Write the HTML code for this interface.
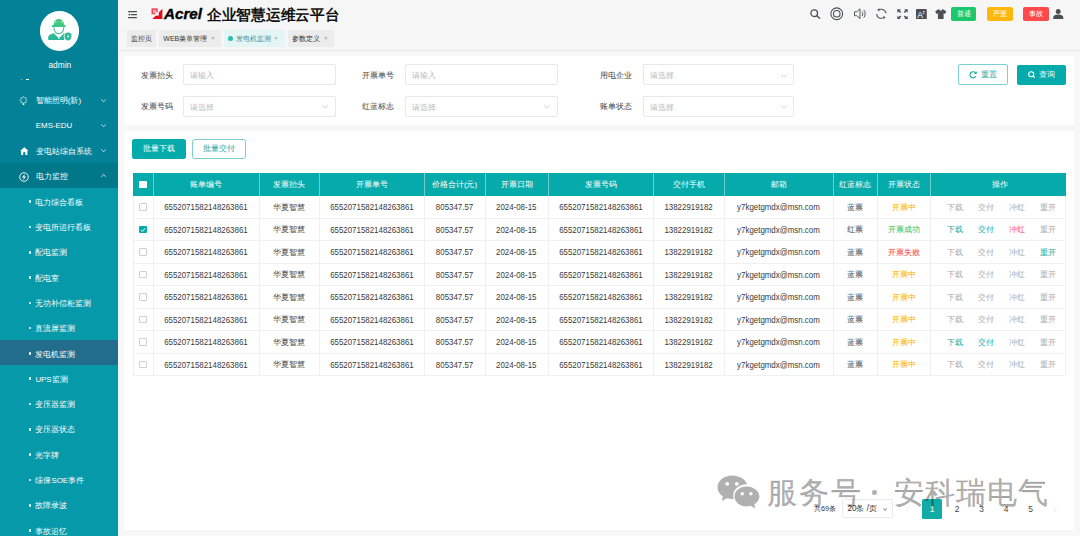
<!DOCTYPE html>
<html><head><meta charset="utf-8">
<style>
*{box-sizing:border-box;margin:0;padding:0}
html,body{width:1080px;height:536px;overflow:hidden;background:#f7f7f7;font-family:"Liberation Sans",sans-serif;color:#333}
.a{position:absolute}
.t{position:absolute;white-space:nowrap;line-height:1}
#sb{position:absolute;left:0;top:0;width:118px;height:536px;background:#0699aa}
#sbtop{position:absolute;left:0;top:0;width:118px;height:188px;background:#038297}
.mi{position:absolute;left:0;width:118px;height:25.3px;color:#fff;font-size:7.9px;display:flex;align-items:center}
.mi span{position:absolute;left:35.8px;top:9.8px;line-height:1}
.chev{position:absolute;left:101px;width:5.3px;height:3.2px}
.sub{position:absolute;left:0;width:118px;height:25.3px;color:#fff;font-size:7.9px;display:flex;align-items:center}
.sub i{position:absolute;left:28.7px;width:2.6px;height:2.6px;border-radius:50%;background:#fff}
.sub span{position:absolute;left:35.4px;top:9.8px;line-height:1}
.tab{position:absolute;top:30px;height:16.7px;background:#ececec;font-size:7px;color:#333;display:flex;align-items:center}
.tab span{position:absolute;top:5.2px;line-height:1}
.tab b{position:absolute;font-weight:normal;color:#999;font-size:6px}
.card{position:absolute;background:#fff}
.lbl{position:absolute;font-size:7.9px;color:#444;line-height:1;white-space:nowrap}
.inp{position:absolute;border:1px solid #e8e8e8;border-radius:2px;background:#fff}
.inp span{position:absolute;left:6px;top:calc(50% + 1.2px);transform:translateY(-50%);font-size:7.6px;color:#b8b8b8;white-space:nowrap;line-height:1}
.inp svg{position:absolute}
.hc{position:absolute;display:flex;align-items:center;justify-content:center;color:#fff;font-size:7.8px;white-space:nowrap}
.bc{position:absolute;display:flex;align-items:center;justify-content:center;color:#444;font-size:7.9px;white-space:nowrap}
.d{display:inline-block;font-size:8.7px;transform:scaleX(0.91);color:#3a3a3a}
</style></head><body>

<!-- Sidebar -->
<div id="sb"></div>
<div id="sbtop"></div>
<div class="a" style="left:0;top:163px;width:118px;height:25px;background:#00788a"></div>
<div class="a" style="left:0;top:340px;width:118px;height:25px;background:#226d8b"></div>

<!-- avatar -->
<div class="a" style="left:39.5px;top:11.3px;width:39.3px;height:39.3px;border-radius:50%;background:#fff"></div>
<svg class="a" style="left:44px;top:14px" width="32" height="30" viewBox="0 0 32 30">
  <defs><linearGradient id="g1" gradientUnits="userSpaceOnUse" x1="0" y1="5" x2="0" y2="27"><stop offset="0" stop-color="#4ccb7c"/><stop offset="1" stop-color="#22b69c"/></linearGradient></defs>
  <g fill="url(#g1)">
  <path d="M9.6 11.4 C9.6 7 11.6 4.9 14.8 4.9 C18 4.9 20 7 20 11.4 Z"/>
  <rect x="7.8" y="11" width="14" height="1.9" rx="0.9"/>
  <path d="M9.4 12.9 L10.4 12.9 C10.4 16.5 12 19 14.8 19 C17.6 19 19.3 16.5 19.3 12.9 L20.3 12.9 C20.3 17.2 18 20 14.8 20 C11.7 20 9.4 17.2 9.4 12.9 Z"/>
  <path d="M4.2 26 L4.2 23.6 C4.2 21.2 6.6 20 10.2 19.3 L14.8 24.2 L19.6 19.3 L20.2 19.5 L20.2 26 Z"/>
  <path d="M24 17.9 L27.8 19.4 L27.8 22.6 C27.8 24.7 26.3 26.3 24 27 C21.7 26.3 20.2 24.7 20.2 22.6 L20.2 19.4 Z" stroke="#fff" stroke-width="0.7"/>
  </g>
  <rect x="11.2" y="7.2" width="1" height="1.6" fill="#fff" opacity="0.8"/>
  <rect x="17.4" y="7.2" width="1" height="1.6" fill="#fff" opacity="0.8"/>
  <path d="M11.3 20.4 L13.6 22.8 M18.3 20.4 L16 22.8" stroke="#fff" stroke-width="0.7"/>
  <rect x="14.2" y="24.2" width="1.3" height="0.8" fill="#fff"/>
  <path d="M24.6 20 L22.9 22.9 L24.1 22.9 L23.6 25.1 L25.4 22.1 L24.2 22.1 Z" fill="#fff"/>
</svg>
<div class="t" style="left:48.5px;top:61.2px;font-size:8.3px;color:#fff">admin</div>
<div class="a" style="left:25.5px;top:78.5px;width:3.2px;height:1px;background:#fff"></div>
<div class="a" style="left:21px;top:78.5px;width:1px;height:1px;background:rgba(255,255,255,.5)"></div>

<!-- parent menu items -->
<div class="mi" style="top:87.6px"><span>智能照明(新)</span></div>
<div class="mi" style="top:112.7px"><span>EMS-EDU</span></div>
<div class="mi" style="top:138px"><span>变电站综自系统</span></div>
<div class="mi" style="top:163.3px"><span>电力监控</span></div>
<!-- icons -->
<svg class="a" style="left:19.2px;top:95.6px" width="9" height="10" viewBox="0 0 9 10">
  <polygon points="4.50,0.40 5.38,2.08 7.19,1.51 6.62,3.32 8.30,4.20 6.62,5.08 7.19,6.89 5.38,6.32 4.50,8.00 3.62,6.32 1.81,6.89 2.38,5.08 0.70,4.20 2.38,3.32 1.81,1.51 3.62,2.08" fill="none" stroke="rgba(255,255,255,0.8)" stroke-width="0.6" stroke-linejoin="miter"/>
  <rect x="3.7" y="7.4" width="1.6" height="1.7" fill="#fff"/>
</svg>
<svg class="a" style="left:19.7px;top:146.8px" width="8.5" height="8.2" viewBox="0 0 8.5 8.2">
  <path d="M4.25 0.2 L8.4 3.9 L7.4 3.9 L7.4 8.1 L1.1 8.1 L1.1 3.9 L0.1 3.9 Z" fill="#fff"/>
  <path d="M3.2 8.1 L3.2 5.6 C3.2 4.9 5.3 4.9 5.3 5.6 L5.3 8.1 Z" fill="#038297"/>
</svg>
<svg class="a" style="left:19px;top:171.5px" width="10" height="10" viewBox="0 0 10 10">
  <circle cx="5" cy="5" r="4.3" fill="none" stroke="#fff" stroke-width="0.9"/>
  <path d="M5.8 1.8 L3 5.4 L4.8 5.4 L4.2 8.2 L7 4.6 L5.2 4.6 Z" fill="#fff"/>
</svg>
<!-- chevrons -->
<svg class="chev" style="top:98.5px" viewBox="0 0 5.3 3.2"><path d="M0.3 0.3 L2.65 2.8 L5 0.3" fill="none" stroke="#fff" stroke-width="0.7"/></svg>
<svg class="chev" style="top:123.6px" viewBox="0 0 5.3 3.2"><path d="M0.3 0.3 L2.65 2.8 L5 0.3" fill="none" stroke="#fff" stroke-width="0.7"/></svg>
<svg class="chev" style="top:148.8px" viewBox="0 0 5.3 3.2"><path d="M0.3 0.3 L2.65 2.8 L5 0.3" fill="none" stroke="#fff" stroke-width="0.7"/></svg>
<svg class="chev" style="top:174.4px" viewBox="0 0 5.3 3.2"><path d="M0.3 2.9 L2.65 0.4 L5 2.9" fill="none" stroke="#fff" stroke-width="0.7"/></svg>

<!-- submenu -->
<div class="sub" style="top:189px"><i></i><span>电力综合看板</span></div>
<div class="sub" style="top:214.3px"><i></i><span>变电所运行看板</span></div>
<div class="sub" style="top:239.6px"><i></i><span>配电监测</span></div>
<div class="sub" style="top:264.9px"><i></i><span>配电室</span></div>
<div class="sub" style="top:290.2px"><i></i><span>无功补偿柜监测</span></div>
<div class="sub" style="top:315.5px"><i></i><span>直流屏监测</span></div>
<div class="sub" style="top:340.8px"><i></i><span>发电机监测</span></div>
<div class="sub" style="top:366.1px"><i></i><span>UPS监测</span></div>
<div class="sub" style="top:391.4px"><i></i><span>变压器监测</span></div>
<div class="sub" style="top:416.7px"><i></i><span>变压器状态</span></div>
<div class="sub" style="top:442px"><i></i><span>光字牌</span></div>
<div class="sub" style="top:467.3px"><i></i><span>综保SOE事件</span></div>
<div class="sub" style="top:492.6px"><i></i><span>故障录波</span></div>
<div class="sub" style="top:517.9px"><i></i><span>事故追忆</span></div>

<!-- HEADER -->
<div class="a" style="left:118px;top:0;width:962px;height:50px;background:#f6f6f6"></div><div class="a" style="left:118px;top:50px;width:962px;height:1px;background:#e8e8e8"></div>
<!-- hamburger -->
<svg class="a" style="left:128px;top:11px" width="9" height="8" viewBox="0 0 9 8" fill="#4b4f56">
  <rect x="0" y="0.1" width="9" height="1.2" rx="0.5"/>
  <rect x="2.6" y="3.1" width="6.4" height="1.2" rx="0.5"/>
  <rect x="0" y="6.1" width="9" height="1.2" rx="0.5"/>
  <path d="M0 3.7 L1.9 2.6 L1.9 4.8 Z"/>
</svg>
<!-- logo -->
<svg class="a" style="left:150.5px;top:8px" width="12" height="11.5" viewBox="0 0 12 11.5">
  <path d="M0.5 0.3 L6.8 0.3 L6.8 6.3 L0.5 6.3 Z" fill="#ec4a5a"/>
  <path d="M11.4 0.7 L11.4 11 L1.4 11 Z" fill="#e60e1c"/>
  <rect x="2.1" y="1.9" width="3.1" height="2.8" fill="#fff" opacity="0.55"/>
  <rect x="4.4" y="4.3" width="3.3" height="3.3" fill="#fff"/>
</svg>
<div class="t" style="left:164px;top:6.6px;font-size:14.2px;font-weight:bold;font-style:italic;color:#000;-webkit-text-stroke:0.35px #000;transform:scaleX(1.07);transform-origin:0 0">Acrel</div>
<div class="t" style="left:207.4px;top:8px;font-size:14.5px;font-weight:bold;color:#111;transform:scaleX(0.98);transform-origin:0 0">企业智慧运维云平台</div>

<!-- header right icons -->
<svg class="a" style="left:810px;top:9.3px" width="11" height="10" viewBox="0 0 11 10" fill="none" stroke="#4b4f56" stroke-width="1.3">
  <circle cx="4.2" cy="4.2" r="3.3"/><path d="M6.6 6.6 L10 9.6"/>
</svg>
<svg class="a" style="left:830px;top:7.3px" width="13.5" height="13.5" viewBox="0 0 13.5 13.5" fill="none" stroke="#4b4f56" stroke-width="0.9">
  <circle cx="6.75" cy="6.75" r="5.9" stroke-width="1.1"/><circle cx="6.75" cy="6.75" r="3.3" stroke-width="1.1"/>
</svg>
<svg class="a" style="left:853.5px;top:7.8px" width="12.5" height="11.5" viewBox="0 0 12.5 11.5" fill="none" stroke="#4b4f56" stroke-width="0.95">
  <path d="M0.5 3.8 L2.8 3.8 L6 0.8 L6 10.7 L2.8 7.7 L0.5 7.7 Z"/>
  <path d="M8 3.5 C9 4.5 9 7 8 8"/><path d="M9.8 1.9 C11.6 3.8 11.6 7.7 9.8 9.6"/>
</svg>
<svg class="a" style="left:875px;top:8px" width="13" height="12" viewBox="0 0 13 12" fill="none" stroke="#4b4f56" stroke-width="1.05">
  <path d="M3.2 1.6 C4.4 1.3 5.6 1.2 6.6 1.3 C9 1.6 10.6 3.2 11.1 5.4"/>
  <path d="M1.6 6.1 C2 8.4 3.6 10.1 6 10.3 C7.2 10.4 8.2 10.2 9.4 9.6"/>
  <path d="M2.1 1.8 L4.4 0.5 L4.4 3.6 Z" fill="#4b4f56" stroke="none"/>
  <path d="M10.7 9.5 L8.4 10.8 L8.4 7.8 Z" fill="#4b4f56" stroke="none"/>
</svg>
<svg class="a" style="left:897px;top:8.6px" width="11" height="10.5" viewBox="0 0 11 10.5" fill="#4b4f56">
  <path d="M0.3 0.3 L3.8 0.3 L2.7 1.4 L4.3 3 L3.2 4.1 L1.6 2.5 L0.3 3.8 Z"/>
  <path d="M10.7 0.3 L7.2 0.3 L8.3 1.4 L6.7 3 L7.8 4.1 L9.4 2.5 L10.7 3.8 Z"/>
  <path d="M0.3 10.2 L3.8 10.2 L2.7 9.1 L4.3 7.5 L3.2 6.4 L1.6 8 L0.3 6.7 Z"/>
  <path d="M10.7 10.2 L7.2 10.2 L8.3 9.1 L6.7 7.5 L7.8 6.4 L9.4 8 L10.7 6.7 Z"/>
</svg>
<svg class="a" style="left:916px;top:8.6px" width="11" height="10.5" viewBox="0 0 11 10.5">
  <rect x="0" y="0" width="10.8" height="10.4" rx="0.8" fill="#4b4f56"/>
  <text x="1.3" y="9" font-family="Liberation Sans" font-size="8.5" fill="#fff">A</text>
  <text x="6.6" y="4.8" font-family="Liberation Sans" font-size="4.5" fill="#fff">z</text>
</svg>
<svg class="a" style="left:935px;top:8.8px" width="11.5" height="10.2" viewBox="0 0 11.5 10.2" fill="#4b4f56">
  <path d="M3.6 0.2 L4.2 0.2 C4.5 1.2 5 1.6 5.75 1.6 C6.5 1.6 7 1.2 7.3 0.2 L7.9 0.2 L11.3 2.2 L10 5 L8.6 4.3 L8.6 10 L2.9 10 L2.9 4.3 L1.5 5 L0.2 2.2 Z"/>
</svg>
<div class="a" style="left:950.8px;top:7.2px;width:25.7px;height:13.6px;border-radius:1.8px;background:#1cc86b"></div>
<div class="t" style="left:956.5px;top:10px;font-size:7.3px;color:#fff">普通</div>
<div class="a" style="left:986.7px;top:7.2px;width:25.9px;height:13.6px;border-radius:1.8px;background:#ffb70d"></div>
<div class="t" style="left:992.5px;top:10px;font-size:7.3px;color:#fff">严重</div>
<div class="a" style="left:1022.8px;top:7.2px;width:25.9px;height:13.6px;border-radius:1.8px;background:#ff4a4d"></div>
<div class="t" style="left:1028.5px;top:10px;font-size:7.3px;color:#fff">事故</div>
<svg class="a" style="left:1053px;top:9px" width="10.5" height="10.3" viewBox="0 0 10.5 10.3" fill="#4b4f56">
  <circle cx="5.25" cy="2.6" r="2.5"/>
  <path d="M0.2 10.2 L0.2 8.6 C0.2 6.6 2.3 5.6 5.25 5.6 C8.2 5.6 10.3 6.6 10.3 8.6 L10.3 10.2 Z"/>
</svg>


<!-- tabs -->
<div class="tab" style="left:127px;width:29px"><span style="left:4px">监控页</span></div>
<div class="tab" style="left:159px;width:62px"><span style="left:4.3px">WEB菜单管理</span><b style="left:52px">×</b></div>
<div class="tab" style="left:224px;width:60.7px;background:#e3f5f5"><i class="a" style="left:4.1px;top:5.9px;width:5px;height:5px;border-radius:50%;background:#2bbcb6"></i><span style="left:11.6px;color:#4b8e96">发电机监测</span><b style="left:50px">×</b></div>
<div class="tab" style="left:287.6px;width:46.8px"><span style="left:4.6px">参数定义</span><b style="left:36.5px">×</b></div>

<!-- FILTER CARD -->
<div class="card" style="left:124px;top:56px;width:950px;height:68.7px"></div>

<!-- TABLE CARD -->
<div class="card" style="left:124px;top:131px;width:950px;height:399px"></div>

<!-- filter form -->
<div class="lbl" style="left:141px;top:72.3px">发票抬头</div>
<div class="inp" style="left:183.4px;top:64.4px;width:152.6px;height:20.8px"><span>请输入</span></div>
<div class="lbl" style="left:362.2px;top:72.3px">开票单号</div>
<div class="inp" style="left:405px;top:64.4px;width:152.6px;height:20.8px"><span>请输入</span></div>
<div class="lbl" style="left:599.5px;top:72.3px">用电企业</div>
<div class="inp" style="left:642.5px;top:64.4px;width:151.8px;height:20.8px"><span>请选择</span><svg style="left:137.8px;top:8.2px" width="6" height="3.6" viewBox="0 0 6 3.6"><path d="M0.4 0.4 L3 3.1 L5.6 0.4" fill="none" stroke="#c0c0c0" stroke-width="0.7"/></svg></div>
<div class="lbl" style="left:141px;top:103.3px">发票号码</div>
<div class="inp" style="left:183.4px;top:96.3px;width:152.6px;height:20.3px"><span>请选择</span><svg style="left:137.8px;top:8px" width="6" height="3.6" viewBox="0 0 6 3.6"><path d="M0.4 0.4 L3 3.1 L5.6 0.4" fill="none" stroke="#c0c0c0" stroke-width="0.7"/></svg></div>
<div class="lbl" style="left:362.2px;top:103.3px">红蓝标志</div>
<div class="inp" style="left:405px;top:96.3px;width:152.6px;height:20.3px"><span>请选择</span><svg style="left:137.8px;top:8px" width="6" height="3.6" viewBox="0 0 6 3.6"><path d="M0.4 0.4 L3 3.1 L5.6 0.4" fill="none" stroke="#c0c0c0" stroke-width="0.7"/></svg></div>
<div class="lbl" style="left:599.5px;top:103.3px">账单状态</div>
<div class="inp" style="left:642.5px;top:96.3px;width:151.8px;height:20.3px"><span>请选择</span><svg style="left:137.8px;top:8px" width="6" height="3.6" viewBox="0 0 6 3.6"><path d="M0.4 0.4 L3 3.1 L5.6 0.4" fill="none" stroke="#c0c0c0" stroke-width="0.7"/></svg></div>

<div class="a" style="left:958px;top:64.4px;width:49.5px;height:20.4px;border:1px solid #7bcfcc;border-radius:2px;background:#fff"></div>
<svg class="a" style="left:968.5px;top:71px" width="8" height="7.5" viewBox="0 0 8 7.5" fill="none" stroke="#12a8a3" stroke-width="1.1">
  <path d="M6.8 2.2 A3.1 3.1 0 1 0 6.9 5.2"/><path d="M7.3 0.6 L7.3 2.7 L5.2 2.7" stroke-width="0.9"/>
</svg>
<div class="t" style="left:981px;top:70.8px;font-size:7.7px;color:#12a8a3">重置</div>
<div class="a" style="left:1016.7px;top:64.8px;width:49.3px;height:20px;border-radius:2px;background:#04abaa"></div>
<svg class="a" style="left:1027.5px;top:70.8px" width="7.5" height="7.5" viewBox="0 0 7.5 7.5" fill="none" stroke="#fff" stroke-width="1.1">
  <circle cx="3.2" cy="3.2" r="2.5"/><path d="M5 5 L7 7"/>
</svg>
<div class="t" style="left:1039.3px;top:70.8px;font-size:7.7px;color:#fff">查询</div>

<!-- batch buttons -->
<div class="a" style="left:132px;top:139px;width:54px;height:20px;border-radius:2.5px;background:#04abaa"></div>
<div class="t" style="left:142.8px;top:145.2px;font-size:7.7px;color:#fff">批量下载</div>
<div class="a" style="left:191.8px;top:139px;width:53.8px;height:20px;border:1px solid #7bcfcc;border-radius:2.5px;background:#fff"></div>
<div class="t" style="left:203px;top:145.2px;font-size:7.7px;color:#12a8a3">批量交付</div>

<div class="a" style="left:133px;top:173px;width:933px;height:23px;background:#04abaa"></div>
<div class="a" style="left:153px;top:173px;width:1px;height:23px;background:#6ccfcb"></div>
<div class="a" style="left:259px;top:173px;width:1px;height:23px;background:#6ccfcb"></div>
<div class="a" style="left:319px;top:173px;width:1px;height:23px;background:#6ccfcb"></div>
<div class="a" style="left:424px;top:173px;width:1px;height:23px;background:#6ccfcb"></div>
<div class="a" style="left:485px;top:173px;width:1px;height:23px;background:#6ccfcb"></div>
<div class="a" style="left:548px;top:173px;width:1px;height:23px;background:#6ccfcb"></div>
<div class="a" style="left:653px;top:173px;width:1px;height:23px;background:#6ccfcb"></div>
<div class="a" style="left:724px;top:173px;width:1px;height:23px;background:#6ccfcb"></div>
<div class="a" style="left:833px;top:173px;width:1px;height:23px;background:#6ccfcb"></div>
<div class="a" style="left:877px;top:173px;width:1px;height:23px;background:#6ccfcb"></div>
<div class="a" style="left:930px;top:173px;width:1px;height:23px;background:#6ccfcb"></div>
<div class="a" style="left:153px;top:196px;width:1px;height:180.0px;background:#eef0f2"></div>
<div class="a" style="left:259px;top:196px;width:1px;height:180.0px;background:#eef0f2"></div>
<div class="a" style="left:319px;top:196px;width:1px;height:180.0px;background:#eef0f2"></div>
<div class="a" style="left:424px;top:196px;width:1px;height:180.0px;background:#eef0f2"></div>
<div class="a" style="left:485px;top:196px;width:1px;height:180.0px;background:#eef0f2"></div>
<div class="a" style="left:548px;top:196px;width:1px;height:180.0px;background:#eef0f2"></div>
<div class="a" style="left:653px;top:196px;width:1px;height:180.0px;background:#eef0f2"></div>
<div class="a" style="left:724px;top:196px;width:1px;height:180.0px;background:#eef0f2"></div>
<div class="a" style="left:833px;top:196px;width:1px;height:180.0px;background:#eef0f2"></div>
<div class="a" style="left:877px;top:196px;width:1px;height:180.0px;background:#eef0f2"></div>
<div class="a" style="left:930px;top:196px;width:1px;height:180.0px;background:#eef0f2"></div>
<div class="a" style="left:133px;top:196px;width:1px;height:180.0px;background:#eef0f2"></div>
<div class="a" style="left:1065px;top:196px;width:1px;height:180.0px;background:#eef0f2"></div>
<div class="a" style="left:133px;top:217.5px;width:933px;height:1px;background:#eef0f2"></div>
<div class="a" style="left:133px;top:240.0px;width:933px;height:1px;background:#eef0f2"></div>
<div class="a" style="left:133px;top:262.5px;width:933px;height:1px;background:#eef0f2"></div>
<div class="a" style="left:133px;top:285.0px;width:933px;height:1px;background:#eef0f2"></div>
<div class="a" style="left:133px;top:307.5px;width:933px;height:1px;background:#eef0f2"></div>
<div class="a" style="left:133px;top:330.0px;width:933px;height:1px;background:#eef0f2"></div>
<div class="a" style="left:133px;top:352.5px;width:933px;height:1px;background:#eef0f2"></div>
<div class="a" style="left:133px;top:375.0px;width:933px;height:1px;background:#eef0f2"></div>
<div class="hc" style="left:153px;top:173px;width:106px;height:23px">账单编号</div>
<div class="hc" style="left:259px;top:173px;width:60px;height:23px">发票抬头</div>
<div class="hc" style="left:319px;top:173px;width:105px;height:23px">开票单号</div>
<div class="hc" style="left:424px;top:173px;width:61px;height:23px">价格合计(元)</div>
<div class="hc" style="left:485px;top:173px;width:63px;height:23px">开票日期</div>
<div class="hc" style="left:548px;top:173px;width:105px;height:23px">发票号码</div>
<div class="hc" style="left:653px;top:173px;width:71px;height:23px">交付手机</div>
<div class="hc" style="left:724px;top:173px;width:109px;height:23px">邮箱</div>
<div class="hc" style="left:833px;top:173px;width:44px;height:23px">红蓝标志</div>
<div class="hc" style="left:877px;top:173px;width:53px;height:23px">开票状态</div>
<div class="hc" style="left:930px;top:173px;width:136px;height:23px"><span style="position:relative;left:2px">操作</span></div>
<div class="a" style="left:139px;top:180.7px;width:7.8px;height:7.8px;border-radius:1px;background:#fff"></div>
<div class="bc" style="left:153px;top:196.0px;width:106px;height:22.5px"><span class="d">6552071582148263861</span></div>
<div class="bc" style="left:259px;top:196.0px;width:60px;height:22.5px">华夏智慧</div>
<div class="bc" style="left:319px;top:196.0px;width:105px;height:22.5px"><span class="d">6552071582148263861</span></div>
<div class="bc" style="left:424px;top:196.0px;width:61px;height:22.5px"><span class="d">805347.57</span></div>
<div class="bc" style="left:485px;top:196.0px;width:63px;height:22.5px"><span class="d">2024-08-15</span></div>
<div class="bc" style="left:548px;top:196.0px;width:105px;height:22.5px"><span class="d">6552071582148263861</span></div>
<div class="bc" style="left:653px;top:196.0px;width:71px;height:22.5px"><span class="d">13822919182</span></div>
<div class="bc" style="left:724px;top:196.0px;width:109px;height:22.5px"><span class="d">y7kgetgmdx@msn.com</span></div>
<div class="bc" style="left:833px;top:196.0px;width:44px;height:22.5px">蓝票</div>
<div class="bc" style="left:877px;top:196.0px;width:53px;height:22.5px;color:#ffab00">开票中</div>
<div class="t" style="left:947px;top:203.7px;font-size:7.8px;color:#a8a8a8">下载</div>
<div class="t" style="left:977.7px;top:203.7px;font-size:7.8px;color:#a8a8a8">交付</div>
<div class="t" style="left:1008.5px;top:203.7px;font-size:7.8px;color:#a8a8a8">冲红</div>
<div class="t" style="left:1039.5px;top:203.7px;font-size:7.8px;color:#a8a8a8">重开</div>
<div class="a" style="left:139px;top:203.0px;width:7.8px;height:7.8px;border-radius:1px;border:1px solid #cfcfcf;background:#fff"></div>
<div class="bc" style="left:153px;top:218.5px;width:106px;height:22.5px"><span class="d">6552071582148263861</span></div>
<div class="bc" style="left:259px;top:218.5px;width:60px;height:22.5px">华夏智慧</div>
<div class="bc" style="left:319px;top:218.5px;width:105px;height:22.5px"><span class="d">6552071582148263861</span></div>
<div class="bc" style="left:424px;top:218.5px;width:61px;height:22.5px"><span class="d">805347.57</span></div>
<div class="bc" style="left:485px;top:218.5px;width:63px;height:22.5px"><span class="d">2024-08-15</span></div>
<div class="bc" style="left:548px;top:218.5px;width:105px;height:22.5px"><span class="d">6552071582148263861</span></div>
<div class="bc" style="left:653px;top:218.5px;width:71px;height:22.5px"><span class="d">13822919182</span></div>
<div class="bc" style="left:724px;top:218.5px;width:109px;height:22.5px"><span class="d">y7kgetgmdx@msn.com</span></div>
<div class="bc" style="left:833px;top:218.5px;width:44px;height:22.5px">红票</div>
<div class="bc" style="left:877px;top:218.5px;width:53px;height:22.5px;color:#17c266">开票成功</div>
<div class="t" style="left:947px;top:226.2px;font-size:7.8px;color:#12a8a3">下载</div>
<div class="t" style="left:977.7px;top:226.2px;font-size:7.8px;color:#12a8a3">交付</div>
<div class="t" style="left:1008.5px;top:226.2px;font-size:7.8px;color:#f5484b">冲红</div>
<div class="t" style="left:1039.5px;top:226.2px;font-size:7.8px;color:#a8a8a8">重开</div>
<div class="a" style="left:139px;top:225.5px;width:7.8px;height:7.8px;border-radius:1px;background:#04abaa"></div>
<svg class="a" style="left:139px;top:225.5px" width="7.8" height="7.8" viewBox="0 0 8 8"><path d="M1.8 4 L3.4 5.6 L6.3 2.5" fill="none" stroke="#fff" stroke-width="1"/></svg>
<div class="bc" style="left:153px;top:241.0px;width:106px;height:22.5px"><span class="d">6552071582148263861</span></div>
<div class="bc" style="left:259px;top:241.0px;width:60px;height:22.5px">华夏智慧</div>
<div class="bc" style="left:319px;top:241.0px;width:105px;height:22.5px"><span class="d">6552071582148263861</span></div>
<div class="bc" style="left:424px;top:241.0px;width:61px;height:22.5px"><span class="d">805347.57</span></div>
<div class="bc" style="left:485px;top:241.0px;width:63px;height:22.5px"><span class="d">2024-08-15</span></div>
<div class="bc" style="left:548px;top:241.0px;width:105px;height:22.5px"><span class="d">6552071582148263861</span></div>
<div class="bc" style="left:653px;top:241.0px;width:71px;height:22.5px"><span class="d">13822919182</span></div>
<div class="bc" style="left:724px;top:241.0px;width:109px;height:22.5px"><span class="d">y7kgetgmdx@msn.com</span></div>
<div class="bc" style="left:833px;top:241.0px;width:44px;height:22.5px">蓝票</div>
<div class="bc" style="left:877px;top:241.0px;width:53px;height:22.5px;color:#f23d3d">开票失败</div>
<div class="t" style="left:947px;top:248.7px;font-size:7.8px;color:#a8a8a8">下载</div>
<div class="t" style="left:977.7px;top:248.7px;font-size:7.8px;color:#a8a8a8">交付</div>
<div class="t" style="left:1008.5px;top:248.7px;font-size:7.8px;color:#a8a8a8">冲红</div>
<div class="t" style="left:1039.5px;top:248.7px;font-size:7.8px;color:#12a8a3">重开</div>
<div class="a" style="left:139px;top:248.0px;width:7.8px;height:7.8px;border-radius:1px;border:1px solid #cfcfcf;background:#fff"></div>
<div class="bc" style="left:153px;top:263.5px;width:106px;height:22.5px"><span class="d">6552071582148263861</span></div>
<div class="bc" style="left:259px;top:263.5px;width:60px;height:22.5px">华夏智慧</div>
<div class="bc" style="left:319px;top:263.5px;width:105px;height:22.5px"><span class="d">6552071582148263861</span></div>
<div class="bc" style="left:424px;top:263.5px;width:61px;height:22.5px"><span class="d">805347.57</span></div>
<div class="bc" style="left:485px;top:263.5px;width:63px;height:22.5px"><span class="d">2024-08-15</span></div>
<div class="bc" style="left:548px;top:263.5px;width:105px;height:22.5px"><span class="d">6552071582148263861</span></div>
<div class="bc" style="left:653px;top:263.5px;width:71px;height:22.5px"><span class="d">13822919182</span></div>
<div class="bc" style="left:724px;top:263.5px;width:109px;height:22.5px"><span class="d">y7kgetgmdx@msn.com</span></div>
<div class="bc" style="left:833px;top:263.5px;width:44px;height:22.5px">蓝票</div>
<div class="bc" style="left:877px;top:263.5px;width:53px;height:22.5px;color:#ffab00">开票中</div>
<div class="t" style="left:947px;top:271.2px;font-size:7.8px;color:#a8a8a8">下载</div>
<div class="t" style="left:977.7px;top:271.2px;font-size:7.8px;color:#a8a8a8">交付</div>
<div class="t" style="left:1008.5px;top:271.2px;font-size:7.8px;color:#a8a8a8">冲红</div>
<div class="t" style="left:1039.5px;top:271.2px;font-size:7.8px;color:#a8a8a8">重开</div>
<div class="a" style="left:139px;top:270.5px;width:7.8px;height:7.8px;border-radius:1px;border:1px solid #cfcfcf;background:#fff"></div>
<div class="bc" style="left:153px;top:286.0px;width:106px;height:22.5px"><span class="d">6552071582148263861</span></div>
<div class="bc" style="left:259px;top:286.0px;width:60px;height:22.5px">华夏智慧</div>
<div class="bc" style="left:319px;top:286.0px;width:105px;height:22.5px"><span class="d">6552071582148263861</span></div>
<div class="bc" style="left:424px;top:286.0px;width:61px;height:22.5px"><span class="d">805347.57</span></div>
<div class="bc" style="left:485px;top:286.0px;width:63px;height:22.5px"><span class="d">2024-08-15</span></div>
<div class="bc" style="left:548px;top:286.0px;width:105px;height:22.5px"><span class="d">6552071582148263861</span></div>
<div class="bc" style="left:653px;top:286.0px;width:71px;height:22.5px"><span class="d">13822919182</span></div>
<div class="bc" style="left:724px;top:286.0px;width:109px;height:22.5px"><span class="d">y7kgetgmdx@msn.com</span></div>
<div class="bc" style="left:833px;top:286.0px;width:44px;height:22.5px">蓝票</div>
<div class="bc" style="left:877px;top:286.0px;width:53px;height:22.5px;color:#ffab00">开票中</div>
<div class="t" style="left:947px;top:293.7px;font-size:7.8px;color:#a8a8a8">下载</div>
<div class="t" style="left:977.7px;top:293.7px;font-size:7.8px;color:#a8a8a8">交付</div>
<div class="t" style="left:1008.5px;top:293.7px;font-size:7.8px;color:#a8a8a8">冲红</div>
<div class="t" style="left:1039.5px;top:293.7px;font-size:7.8px;color:#a8a8a8">重开</div>
<div class="a" style="left:139px;top:293.0px;width:7.8px;height:7.8px;border-radius:1px;border:1px solid #cfcfcf;background:#fff"></div>
<div class="bc" style="left:153px;top:308.5px;width:106px;height:22.5px"><span class="d">6552071582148263861</span></div>
<div class="bc" style="left:259px;top:308.5px;width:60px;height:22.5px">华夏智慧</div>
<div class="bc" style="left:319px;top:308.5px;width:105px;height:22.5px"><span class="d">6552071582148263861</span></div>
<div class="bc" style="left:424px;top:308.5px;width:61px;height:22.5px"><span class="d">805347.57</span></div>
<div class="bc" style="left:485px;top:308.5px;width:63px;height:22.5px"><span class="d">2024-08-15</span></div>
<div class="bc" style="left:548px;top:308.5px;width:105px;height:22.5px"><span class="d">6552071582148263861</span></div>
<div class="bc" style="left:653px;top:308.5px;width:71px;height:22.5px"><span class="d">13822919182</span></div>
<div class="bc" style="left:724px;top:308.5px;width:109px;height:22.5px"><span class="d">y7kgetgmdx@msn.com</span></div>
<div class="bc" style="left:833px;top:308.5px;width:44px;height:22.5px">蓝票</div>
<div class="bc" style="left:877px;top:308.5px;width:53px;height:22.5px;color:#ffab00">开票中</div>
<div class="t" style="left:947px;top:316.2px;font-size:7.8px;color:#a8a8a8">下载</div>
<div class="t" style="left:977.7px;top:316.2px;font-size:7.8px;color:#a8a8a8">交付</div>
<div class="t" style="left:1008.5px;top:316.2px;font-size:7.8px;color:#a8a8a8">冲红</div>
<div class="t" style="left:1039.5px;top:316.2px;font-size:7.8px;color:#a8a8a8">重开</div>
<div class="a" style="left:139px;top:315.5px;width:7.8px;height:7.8px;border-radius:1px;border:1px solid #cfcfcf;background:#fff"></div>
<div class="bc" style="left:153px;top:331.0px;width:106px;height:22.5px"><span class="d">6552071582148263861</span></div>
<div class="bc" style="left:259px;top:331.0px;width:60px;height:22.5px">华夏智慧</div>
<div class="bc" style="left:319px;top:331.0px;width:105px;height:22.5px"><span class="d">6552071582148263861</span></div>
<div class="bc" style="left:424px;top:331.0px;width:61px;height:22.5px"><span class="d">805347.57</span></div>
<div class="bc" style="left:485px;top:331.0px;width:63px;height:22.5px"><span class="d">2024-08-15</span></div>
<div class="bc" style="left:548px;top:331.0px;width:105px;height:22.5px"><span class="d">6552071582148263861</span></div>
<div class="bc" style="left:653px;top:331.0px;width:71px;height:22.5px"><span class="d">13822919182</span></div>
<div class="bc" style="left:724px;top:331.0px;width:109px;height:22.5px"><span class="d">y7kgetgmdx@msn.com</span></div>
<div class="bc" style="left:833px;top:331.0px;width:44px;height:22.5px">蓝票</div>
<div class="bc" style="left:877px;top:331.0px;width:53px;height:22.5px;color:#ffab00">开票中</div>
<div class="t" style="left:947px;top:338.7px;font-size:7.8px;color:#12a8a3">下载</div>
<div class="t" style="left:977.7px;top:338.7px;font-size:7.8px;color:#12a8a3">交付</div>
<div class="t" style="left:1008.5px;top:338.7px;font-size:7.8px;color:#a8a8a8">冲红</div>
<div class="t" style="left:1039.5px;top:338.7px;font-size:7.8px;color:#a8a8a8">重开</div>
<div class="a" style="left:139px;top:338.0px;width:7.8px;height:7.8px;border-radius:1px;border:1px solid #cfcfcf;background:#fff"></div>
<div class="bc" style="left:153px;top:353.5px;width:106px;height:22.5px"><span class="d">6552071582148263861</span></div>
<div class="bc" style="left:259px;top:353.5px;width:60px;height:22.5px">华夏智慧</div>
<div class="bc" style="left:319px;top:353.5px;width:105px;height:22.5px"><span class="d">6552071582148263861</span></div>
<div class="bc" style="left:424px;top:353.5px;width:61px;height:22.5px"><span class="d">805347.57</span></div>
<div class="bc" style="left:485px;top:353.5px;width:63px;height:22.5px"><span class="d">2024-08-15</span></div>
<div class="bc" style="left:548px;top:353.5px;width:105px;height:22.5px"><span class="d">6552071582148263861</span></div>
<div class="bc" style="left:653px;top:353.5px;width:71px;height:22.5px"><span class="d">13822919182</span></div>
<div class="bc" style="left:724px;top:353.5px;width:109px;height:22.5px"><span class="d">y7kgetgmdx@msn.com</span></div>
<div class="bc" style="left:833px;top:353.5px;width:44px;height:22.5px">蓝票</div>
<div class="bc" style="left:877px;top:353.5px;width:53px;height:22.5px;color:#ffab00">开票中</div>
<div class="t" style="left:947px;top:361.2px;font-size:7.8px;color:#a8a8a8">下载</div>
<div class="t" style="left:977.7px;top:361.2px;font-size:7.8px;color:#a8a8a8">交付</div>
<div class="t" style="left:1008.5px;top:361.2px;font-size:7.8px;color:#a8a8a8">冲红</div>
<div class="t" style="left:1039.5px;top:361.2px;font-size:7.8px;color:#a8a8a8">重开</div>
<div class="a" style="left:139px;top:360.5px;width:7.8px;height:7.8px;border-radius:1px;border:1px solid #cfcfcf;background:#fff"></div>
<!-- pager -->
<div class="t" style="left:814px;top:505.6px;font-size:7.1px;color:#333">共69条</div>
<div class="a" style="left:842.2px;top:499.2px;width:50.4px;height:19.2px;border:1px solid #e8eaec;border-radius:1.5px;background:#fff"></div>
<div class="t" style="left:847.4px;top:504.6px;font-size:8.2px;color:#333">20条 /页</div>
<svg class="a" style="left:882.8px;top:507.6px" width="4.4" height="3" viewBox="0 0 4.4 3"><path d="M0.4 0.4 L2.2 2.4 L4 0.4" fill="none" stroke="#2a4a8a" stroke-width="0.8"/></svg>
<svg class="a" style="left:906px;top:507px" width="3" height="5" viewBox="0 0 3 5"><path d="M2.6 0.3 L0.5 2.5 L2.6 4.7" fill="none" stroke="#dcdcdc" stroke-width="0.7"/></svg>
<div class="a" style="left:922px;top:499.2px;width:20px;height:19.7px;border-radius:1.5px;background:#12aca6"></div>
<div class="t" style="left:922px;top:505.3px;width:20px;text-align:center;font-size:8.4px;color:#fff">1</div>
<div class="t" style="left:947px;top:505.3px;width:20px;text-align:center;font-size:8.4px;color:#444">2</div>
<div class="t" style="left:971.5px;top:505.3px;width:20px;text-align:center;font-size:8.4px;color:#444">3</div>
<div class="t" style="left:996px;top:505.3px;width:20px;text-align:center;font-size:8.4px;color:#444">4</div>
<div class="t" style="left:1020.5px;top:505.3px;width:20px;text-align:center;font-size:8.4px;color:#444">5</div>
<svg class="a" style="left:1054px;top:507px" width="3" height="5" viewBox="0 0 3 5"><path d="M0.4 0.3 L2.5 2.5 L0.4 4.7" fill="none" stroke="#dcdcdc" stroke-width="0.7"/></svg>

<!-- watermark -->
<svg class="a" style="left:717px;top:474.5px" width="44" height="36" viewBox="0 0 44 36">
  <path fill="rgba(0,0,0,0.31)" d="M15 0.5 C6.8 0.5 0.5 5.8 0.5 12.3 C0.5 16 2.6 19.3 5.8 21.4 L4.8 26 L10 23.3 C11.6 23.8 13.2 24 15 24 C15.6 24 16.2 24 16.8 23.9 C16.4 22.8 16.2 21.6 16.2 20.4 C16.2 14.2 22.2 9.2 29.6 9.2 L30 9.2 C28.6 4.2 22.4 0.5 15 0.5 Z"/>
  <path fill="rgba(0,0,0,0.31)" d="M29.6 11.6 C22.8 11.6 17.5 16 17.5 21.5 C17.5 27 22.8 31.4 29.6 31.4 C31 31.4 32.3 31.2 33.5 30.8 L38.3 33.6 L37.4 29.2 C40.4 27.4 42.4 24.6 42.4 21.5 C42.4 16 36.4 11.6 29.6 11.6 Z"/>
  <g fill="#fff">
    <circle cx="10.2" cy="8.8" r="1.9"/><circle cx="19.8" cy="8.8" r="1.9"/>
    <circle cx="25.3" cy="18.8" r="1.7"/><circle cx="33.9" cy="18.8" r="1.7"/>
  </g>
</svg>
<div class="t" style="left:767px;top:478px;font-size:29.5px;letter-spacing:1.8px;color:rgba(0,0,0,0.31);-webkit-text-stroke:0.35px rgba(0,0,0,0.31)">服务号</div>
<div class="a" style="left:872.2px;top:490.3px;width:4.6px;height:4.6px;border-radius:50%;background:rgba(0,0,0,0.31)"></div>
<div class="t" style="left:893.5px;top:478px;font-size:29.5px;letter-spacing:1.1px;color:rgba(0,0,0,0.31);-webkit-text-stroke:0.35px rgba(0,0,0,0.31)">安科瑞电气</div>
</body></html>
